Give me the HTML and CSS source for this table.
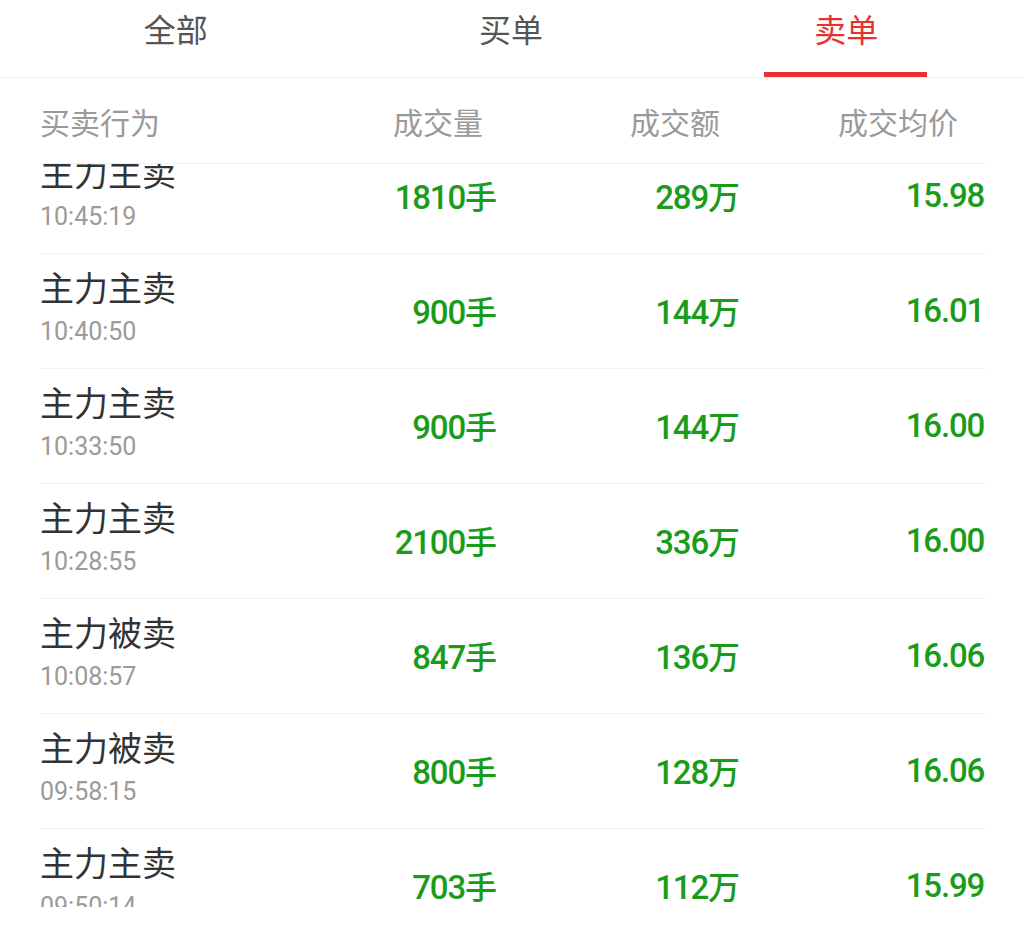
FILE: index.html
```html
<!DOCTYPE html>
<html lang="zh-CN">
<head>
<meta charset="utf-8">
<title>卖单</title>
<link rel="stylesheet" href="styles.css">
</head>
<body>
<div class="page">
  <nav class="tabs">
    <div class="tab">全部</div>
    <div class="tab">买单</div>
    <div class="tab tab-active">卖单</div>
  </nav>
  <div class="table">
    <div class="thead">
      <div class="th">买卖行为</div>
      <div class="th th-num th-vol">成交量</div>
      <div class="th th-num th-amt">成交额</div>
      <div class="th th-num th-avg">成交均价</div>
    </div>
    <div class="viewport">
      <div class="list">
        <div class="row">
          <div class="who"><div class="act">主力主卖</div><div class="time">10:45:19</div></div>
          <div class="num">1810<span class="cn">手</span></div>
          <div class="num">289<span class="cn">万</span></div>
          <div class="num">15.98</div>
        </div>
        <div class="row">
          <div class="who"><div class="act">主力主卖</div><div class="time">10:40:50</div></div>
          <div class="num">900<span class="cn">手</span></div>
          <div class="num">144<span class="cn">万</span></div>
          <div class="num">16.01</div>
        </div>
        <div class="row">
          <div class="who"><div class="act">主力主卖</div><div class="time">10:33:50</div></div>
          <div class="num">900<span class="cn">手</span></div>
          <div class="num">144<span class="cn">万</span></div>
          <div class="num">16.00</div>
        </div>
        <div class="row">
          <div class="who"><div class="act">主力主卖</div><div class="time">10:28:55</div></div>
          <div class="num">2100<span class="cn">手</span></div>
          <div class="num">336<span class="cn">万</span></div>
          <div class="num">16.00</div>
        </div>
        <div class="row">
          <div class="who"><div class="act">主力被卖</div><div class="time">10:08:57</div></div>
          <div class="num">847<span class="cn">手</span></div>
          <div class="num">136<span class="cn">万</span></div>
          <div class="num">16.06</div>
        </div>
        <div class="row">
          <div class="who"><div class="act">主力被卖</div><div class="time">09:58:15</div></div>
          <div class="num">800<span class="cn">手</span></div>
          <div class="num">128<span class="cn">万</span></div>
          <div class="num">16.06</div>
        </div>
        <div class="row">
          <div class="who"><div class="act">主力主卖</div><div class="time">09:50:14</div></div>
          <div class="num">703<span class="cn">手</span></div>
          <div class="num">112<span class="cn">万</span></div>
          <div class="num">15.99</div>
        </div>
      </div>
    </div>
  </div>
</div>
</body>
</html>
```

FILE: styles.css
```css
html, body {
  margin: 0;
  padding: 0;
  background: #ffffff;
}

body {
  font-family: "Noto Sans CJK SC", "Noto Sans", sans-serif;
  color: #333333;
}

.page {
  width: 1024px;
}

.tabs {
  display: flex;
  height: 77px;
  padding: 0 10px 0 8px;
  border-bottom: 1px solid #efefef;
}

.tab {
  flex: 1;
  position: relative;
  text-align: center;
  font-size: 32px;
  line-height: 44px;
  padding-top: 6px;
  color: #555555;
}

.tab-active {
  color: #e8312f;
}

.tab-active::after {
  content: "";
  position: absolute;
  left: 50%;
  bottom: 0;
  width: 163px;
  height: 5px;
  margin-left: -82px;
  background: #e8312f;
}

.table {
  padding: 0 38px 0 40px;
}

.thead,
.row {
  display: grid;
  grid-template-columns: 220px 237px 243px 1fr;
}

.thead {
  height: 85px;
  align-items: center;
  border-bottom: 1px solid #f2f2f2;
}

.th {
  font-size: 30px;
  line-height: 40px;
  color: #9a9a9a;
}

.th-num {
  text-align: right;
}

.th-vol { padding-right: 14px; }
.th-amt { padding-right: 20px; }
.th-avg { padding-right: 28px; }

.viewport {
  height: 743px;
  overflow: hidden;
}

.list {
  margin-top: -26px;
}

.row {
  height: 114px;
  border-top: 1px solid #f2f2f2;
  align-items: center;
}

.who {
  align-self: start;
  padding-top: 13px;
}

.act {
  font-size: 34px;
  line-height: 40px;
  color: #333333;
  white-space: nowrap;
}

.time {
  margin-top: 10px;
  font-family: Roboto, "Noto Sans", sans-serif;
  font-size: 25px;
  line-height: 30px;
  color: #9a9a9a;
}

.num {
  text-align: right;
  font-family: Roboto, "Noto Sans CJK SC", sans-serif;
  font-weight: 500;
  font-size: 33px;
  line-height: 40px;
  letter-spacing: -1.2px;
  color: #1a9c1a;
  white-space: nowrap;
}

.num:last-child {
  margin-right: 2px;
}

.cn {
  font-family: "Noto Sans CJK SC", sans-serif;
  font-weight: 500;
  font-size: 32px;
  letter-spacing: 0;
}
```
